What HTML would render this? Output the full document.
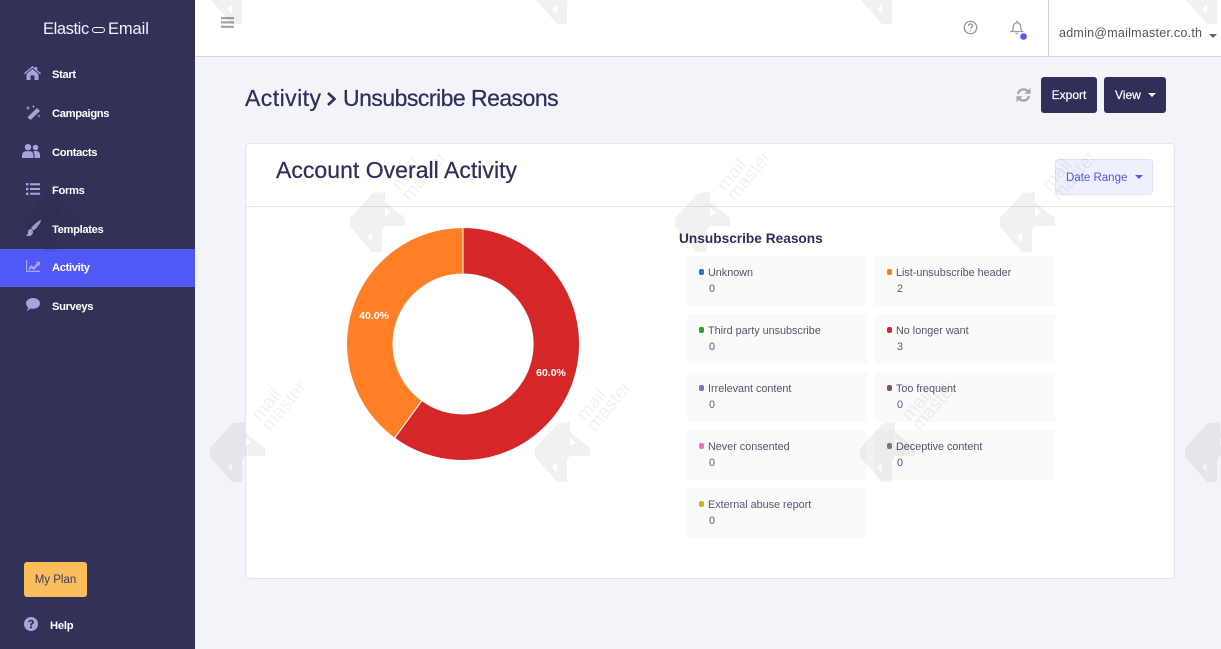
<!DOCTYPE html>
<html><head><meta charset="utf-8"><title>Unsubscribe Reasons</title>
<style>
*{box-sizing:border-box}
html,body{margin:0;padding:0;width:1221px;height:649px;overflow:hidden}
body{position:relative;background:#f3f4f9;font-family:"Liberation Sans",sans-serif;color:#2f2f5a}
.a{position:absolute;white-space:nowrap}
#side{position:absolute;left:0;top:0;width:195px;height:649px;background:#323259}
#top{position:absolute;left:195px;top:0;width:1026px;height:57px;background:#fff;border-bottom:1px solid #d3d6e0}
.nav{position:absolute;left:52px;font-size:11.2px;font-weight:bold;color:#fff;line-height:14px;letter-spacing:-.35px}
.ic{position:absolute;fill:#a5a5dc}
.cell{position:absolute;width:180px;height:50px;background:#fafafa}
.cell i{position:absolute;left:12px;top:13px;width:5px;height:6px;border-radius:2px}
.cell b{position:absolute;left:21px;top:10px;font-weight:normal;font-size:10.8px;line-height:14px;color:#55556f;white-space:nowrap}
.cell u{position:absolute;left:22px;top:26px;text-decoration:none;font-size:10.8px;line-height:14px;color:#55606f}
.cell u.bl{color:#3c5a9a}
.btn{position:absolute;top:77px;height:36px;background:#2f2f5a;border-radius:3px;color:#fff;font-size:12px;line-height:36px;-webkit-text-stroke:.2px #fff}
.h{-webkit-text-stroke:.25px #2f2f5a}
</style></head><body>

<div id="side"></div>
<div class="a" style="left:43px;top:19px;font-size:16.5px;line-height:20px;color:#f2f2f8;letter-spacing:-.4px">Elastic</div>
<div class="a" style="left:92px;top:27px;width:13px;height:6px;border:1.3px solid #f2f2f8;border-radius:3px"></div>
<div class="a" style="left:108px;top:19px;font-size:16.5px;line-height:20px;color:#f2f2f8;letter-spacing:-.1px">Email</div>

<svg class="ic" style="left:24px;top:66px" width="17" height="14" viewBox="0 0 17 14"><path d="M8.5 0 11 2.2V1h2.2v3.100L17 7.300l-.8.900L8.500 1.700.8 8.200 0 7.300zM8.500 3 14.500 8v6h-4V9.500h-4V14h-4V8z"/></svg>
<div class="nav" style="top:68px">Start</div>
<svg class="ic" style="left:25px;top:105px" width="16" height="15" viewBox="0 0 16 15"><path d="M12 3 15 6 5.500 15 2.500 12.200z"/><path d="M3 1l.7 1.500L5 3l-1.300.6L3 5l-.7-1.400L1 3l1.300-.5zM8.500 0l.5 1 1 .5-1 .5-.5 1-.5-1-1-.5 1-.5zM14 9.500l.5 1 1 .5-1 .5-.5 1-.5-1-1-.5 1-.5z"/></svg>
<div class="nav" style="top:107px">Campaigns</div>
<svg class="ic" style="left:22px;top:144px" width="18" height="14" viewBox="0 0 18 14"><circle cx="6" cy="3.200" r="3.200"/><circle cx="13.500" cy="3.500" r="2.800"/><path d="M0 14v-2.500C0 8.800 2 7.200 4 7.200h4c2 0 3.500 1.600 3.500 4.300V14zM12.500 14v-3c0-1.500-.5-2.700-1.300-3.500.7-.4 1.300-.5 2-.5h1c2 0 3.800 1.600 3.800 3.800V14z"/></svg>
<div class="nav" style="top:146px">Contacts</div>
<svg class="ic" style="left:26px;top:183px" width="14" height="12" viewBox="0 0 14 12"><path d="M0 0h2.400v2.400H0zM4 .2h10v2H4zM0 4.800h2.400v2.400H0zM4 5h10v2H4zM0 9.600h2.400V12H0zM4 9.800h10v2H4z"/></svg>
<div class="nav" style="top:184px">Forms</div>
<svg class="ic" style="left:26px;top:220px" width="15" height="16" viewBox="0 0 15 16"><path d="M14.500 0c.5.300.5 1 .2 1.600C13 5 10 9 7.500 10.500L5 8C7 5.500 11.500 1.500 14.500 0zM4 9c2 0 3.200 1.500 3 3.200C6.800 14.800 4.500 16 2.500 16 1 16 .3 15.500 0 15c1.500 0 2-1 2-2.500C2 10.500 3 9 4 9z"/></svg>
<div class="nav" style="top:223px">Templates</div>
<div class="a" style="left:0;top:249px;width:195px;height:38px;background:#5058f7"></div>
<svg class="a" style="left:26px;top:260px;fill:#a5a5f0" width="14" height="12" viewBox="0 0 14 12"><path d="M0 0h1.200v10.800H14V12H0z"/><path d="M2.500 8.500 5.300 5l2.300 2L11 3l-1.200-1.200H14V6l-1.200-1.200-5 5.300-2.300-2-2 2.200z"/></svg>
<div class="nav" style="top:261px">Activity</div>
<svg class="ic" style="left:26px;top:298px" width="14" height="13" viewBox="0 0 14 13"><path d="M7 0c3.900 0 7 2.400 7 5.400s-3.100 5.400-7 5.400c-.9 0-1.700-.1-2.500-.4C3.500 11.400 2 12.600.5 12.800c.9-1 1.600-2 1.700-3.400C.8 8.400 0 7 0 5.400 0 2.400 3.100 0 7 0z"/></svg>
<div class="nav" style="top:300px">Surveys</div>

<div class="a" style="left:24px;top:562px;width:63px;height:35px;background:#fbbd5b;border-radius:3px;color:#3c3c62;font-size:11.500px;line-height:36px;text-align:center">My Plan</div>
<svg class="ic" style="left:24px;top:617px" width="14" height="14" viewBox="0 0 14 14"><path fill-rule="evenodd" d="M7 0a7 7 0 1 1 0 14A7 7 0 0 1 7 0zM6 9.300v2h2v-2zM7 2.700c-1.600 0-2.700.9-2.900 2.300l1.600.4c.2-.7.600-1.100 1.300-1.100.6 0 1 .3 1 .8 0 .4-.3.700-.9 1.100-.8.500-1.100 1-1.100 1.800v.4h1.900v-.3c0-.4.200-.6.800-1 .8-.5 1.200-1.100 1.200-2 0-1.500-1.200-2.400-2.900-2.400z"/></svg>
<div class="nav" style="left:50px;top:619px;letter-spacing:-.2px">Help</div>

<div id="top"></div>
<svg class="a" style="left:221px;top:16px;fill:#a0a3ad" width="13" height="13" viewBox="0 0 13 13"><path d="M0 1h13v2.200H0zM0 5.300h13v2.200H0zM0 9.700h13v2.200H0z"/></svg>
<svg class="a" style="left:963px;top:20px" width="15" height="15" viewBox="0 0 15 15" fill="none" stroke="#9a9da6" stroke-width="1.400"><circle cx="7.500" cy="7.500" r="6.200"/><path d="M5.500 6c0-1.200.9-2 2-2s2 .7 2 1.700c0 1.500-2 1.500-2 3"/><path d="M7.500 10v1.300"/></svg>
<svg class="a" style="left:1010px;top:20px" width="18" height="20" viewBox="0 0 18 20" fill="none" stroke="#9a9da6" stroke-width="1.300"><path d="M1.500 11.500c1.200-.8 1.800-2 1.800-4.500 0-2.500 1.400-4 3.700-4.500 2.300.5 3.700 2 3.700 4.500 0 2.500.6 3.700 1.800 4.500z"/><path d="M7 .5v2M5.500 13.500h2.500"/><circle cx="13.500" cy="16.500" r="3.300" fill="#5058f7" stroke="none"/></svg>
<div class="a" style="left:1048px;top:0;width:1px;height:56px;background:#d3d6e0"></div>
<div class="a" style="left:1059px;top:26px;font-size:12.500px;line-height:15px;color:#55555f;letter-spacing:.25px">admin@mailmaster.co.th</div>
<div class="a" style="left:1209px;top:34px;border:4px solid transparent;border-top:4px solid #666;border-bottom:0"></div>

<div class="a h" style="left:245px;top:84px;font-size:23px;line-height:28px;color:#2f2f5a;letter-spacing:.45px">Activity</div>
<svg class="a" style="left:326px;top:91px" width="11" height="16" viewBox="0 0 11 16" fill="none" stroke="#2f2f5a" stroke-width="2.600"><path d="M2 2l6.500 6L2 14"/></svg>
<div class="a h" style="left:343px;top:84px;font-size:23px;line-height:28px;color:#2f2f5a;letter-spacing:-.52px">Unsubscribe Reasons</div>

<svg class="a" style="left:1016px;top:87px" width="15" height="16" viewBox="0 0 15 16" fill="none" stroke="#a2a6ad" stroke-width="2.200"><path d="M2 7C2.500 4.200 4.800 2.400 7.500 2.400c1.900 0 3.400.8 4.500 2.300"/><path d="M13 9c-.5 2.800-2.800 4.600-5.500 4.600-1.900 0-3.400-.8-4.500-2.300"/><path d="M14.500.8v6h-6zM.5 15.200v-6h6z" fill="#a2a6ad" stroke="none"/></svg>
<div class="btn" style="left:1041px;width:56px;text-align:center">Export</div>
<div class="btn" style="left:1104px;width:62px;padding-left:11px">View</div>
<div class="a" style="left:1148px;top:93px;border:4px solid transparent;border-top:4px solid #fff;border-bottom:0"></div>

<div class="a" style="left:245px;top:143px;width:930px;height:436px;background:#fff;border:1px solid #e4e6ee;border-radius:4px"></div>
<div class="a" style="left:246px;top:206px;width:928px;height:1px;background:#e6e7ea"></div>
<div class="a h" style="left:276px;top:155px;font-size:23px;line-height:30px;color:#2f2f5a;letter-spacing:.03px">Account Overall Activity</div>
<div class="a" style="left:1055px;top:159px;width:98px;height:36px;background:#eef0fe;border:1px solid #dfe2f8;border-radius:4px;color:#5058e0;font-size:11.500px;line-height:36px;padding-left:10px">Date Range</div>
<div class="a" style="left:1135px;top:175px;border:4px solid transparent;border-top:4px solid #5058f0;border-bottom:0"></div>

<svg class="a" style="left:340px;top:221px" width="246" height="246" viewBox="-123 -123 246 246">
<path d="M0-116.500A116.500 116.500 0 1 1-68.500 94.200L-41.100 56.600A70 70 0 1 0 0-70z" fill="#d62728" stroke="#fff" stroke-width="1"/>
<path d="M-68.500 94.200A116.500 116.500 0 0 1 0-116.500V-70A70 70 0 0 0-41.100 56.600z" fill="#ff7f27" stroke="#fff" stroke-width="1"/>
<text x="88" y="32" font-family="Liberation Sans" font-size="10.500" font-weight="bold" fill="#fff" text-anchor="middle">60.0%</text>
<text x="-89" y="-25" font-family="Liberation Sans" font-size="10.500" font-weight="bold" fill="#fff" text-anchor="middle">40.0%</text>
</svg>

<div class="a" style="left:679px;top:230px;font-size:13.700px;line-height:17px;font-weight:bold;color:#2f2f5a">Unsubscribe Reasons</div>

<div class="cell" style="left:687px;top:256px"><i style="background:#1f77b4"></i><b>Unknown</b><u>0</u></div>
<div class="cell" style="left:875px;top:256px"><i style="background:#ff7f0e"></i><b>List-unsubscribe header</b><u>2</u></div>
<div class="cell" style="left:687px;top:314px"><i style="background:#2ca02c"></i><b>Third party unsubscribe</b><u class="bl">0</u></div>
<div class="cell" style="left:875px;top:314px"><i style="background:#d62728"></i><b>No longer want</b><u>3</u></div>
<div class="cell" style="left:687px;top:372px"><i style="background:#9467bd"></i><b>Irrelevant content</b><u>0</u></div>
<div class="cell" style="left:875px;top:372px"><i style="background:#8c564b"></i><b>Too frequent</b><u class="bl">0</u></div>
<div class="cell" style="left:687px;top:430px"><i style="background:#e377c2"></i><b>Never consented</b><u>0</u></div>
<div class="cell" style="left:875px;top:430px"><i style="background:#7f7f7f"></i><b>Deceptive content</b><u class="bl">0</u></div>
<div class="cell" style="left:687px;top:488px"><i style="background:#bcbd22"></i><b>External abuse report</b><u>0</u></div>

<svg class="a" style="left:0;top:0;pointer-events:none" width="1221" height="649" viewBox="0 0 1221 649">
<defs>
<path id="mk" fill-rule="evenodd" d="M0 26 23 1 35 0V10L55 26V34H35L32 38V60H22L0 35zM35 15V24L41 21zM22 40 17 45 22 50z"/>
<g id="tx">
<text font-family="Liberation Sans" font-size="19" transform="translate(50 0) rotate(-50)">mail</text>
<text font-family="Liberation Sans" font-size="19" transform="translate(60 10) rotate(-50)">master</text>
</g>
</defs>
<g fill="#000" fill-opacity=".055">
<use href="#mk" x="210" y="-36"/><use href="#mk" x="535" y="-36"/><use href="#mk" x="860" y="-36"/><use href="#mk" x="1185" y="-36"/>
<use href="#mk" x="25" y="192"/><use href="#mk" x="350" y="192"/><use href="#mk" x="675" y="192"/><use href="#mk" x="1000" y="192"/>
<use href="#mk" x="210" y="422"/><use href="#mk" x="535" y="422"/><use href="#mk" x="860" y="422"/><use href="#mk" x="1185" y="422"/>
<use href="#tx" x="25" y="192"/><use href="#tx" x="350" y="192"/><use href="#tx" x="675" y="192"/><use href="#tx" x="1000" y="192"/>
<use href="#tx" x="210" y="422"/><use href="#tx" x="535" y="422"/><use href="#tx" x="860" y="422"/>
</g>
</svg>
</body></html>
